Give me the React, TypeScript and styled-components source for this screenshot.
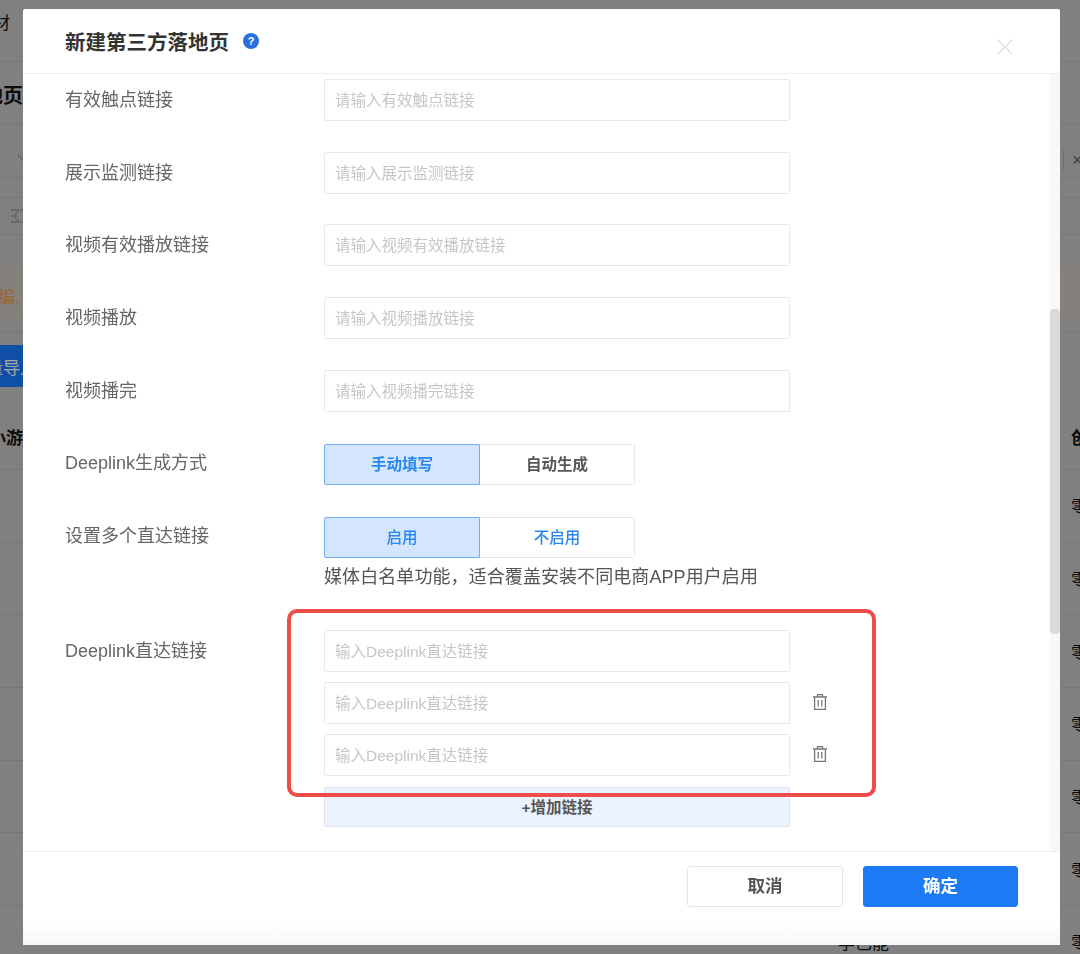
import React from 'react'
import styled, { createGlobalStyle } from 'styled-components'

const FONT = `"Liberation Sans", "Noto Sans CJK SC", sans-serif`

const GlobalStyle = createGlobalStyle`
  html, body {
    margin: 0;
    height: 100%;
    overflow: hidden;
    background: #c5c5c5;
    font-family: ${FONT};
  }
  * { box-sizing: border-box; }
`

/* page behind the dialog */
const Page = styled.div`
  width: 1080px;
  height: 954px;
  overflow: hidden;
  color: #111;
`
const BackRow = styled.div<{ $h: number; $line?: boolean; $bg?: string; $pt?: number; $pb?: number }>`
  height: ${p => p.$h}px;
  padding: ${p => p.$pt || 0}px 0 ${p => p.$pb || 0}px;
  display: flex;
  align-items: center;
  justify-content: space-between;
  background: ${p => p.$bg || 'transparent'};
  border-bottom: ${p => (p.$line ? '1px solid #b7b7b7' : 'none')};
`
const BackText = styled.span<{ $size?: number; $shift?: number; $color?: string; $bold?: boolean }>`
  font-size: ${p => p.$size || 17}px;
  font-weight: ${p => (p.$bold ? 700 : 400)};
  margin-left: ${p => p.$shift || 0}px;
  color: ${p => p.$color || '#111'};
  white-space: nowrap;
`
const BackClose = styled.span`
  width: 17px;
  height: 20px;
  border-left: 1px solid #a8a8a8;
  padding-left: 8px;
  font-size: 18px;
  line-height: 20px;
  color: #666;
`
const BackChevron = styled.svg`
  width: 12px;
  height: 8px;
  margin-left: 17px;
  margin-top: -5px;
  fill: none;
  stroke: #999;
  stroke-width: 1.2;
`
const BackTool = styled.svg`
  width: 15px;
  height: 16px;
  margin-left: 11px;
  fill: none;
  stroke: #999;
  stroke-width: 1.3;
`
const BackButton = styled.div`
  width: 23px;
  height: 42px;
  background: #1a7aff;
  color: #fff;
  font-size: 17px;
  line-height: 47px;
  overflow: hidden;
  white-space: nowrap;
  text-indent: -14px;
`
const BackCols = styled.div`
  width: 100%;
  height: 100%;
  display: grid;
  grid-template-columns: 838px 233px 9px;
  align-items: center;
  overflow: hidden;
`

/* dialog */
const Overlay = styled.div`
  position: fixed;
  inset: 0;
  background: rgba(0, 0, 0, 0.35);
  padding: 9px 20px 9px 23px;
`
const Modal = styled.div`
  height: 936px;
  background: #fff;
  border-radius: 2px;
  display: flex;
  flex-direction: column;
  color: #666;
`
const Header = styled.header`
  height: 65px;
  flex: none;
  padding: 0 47px 0 42px;
  display: flex;
  align-items: center;
  border-bottom: 1px solid #eeeeee;
`
const Title = styled.h1`
  margin: 0;
  font-size: 20.5px;
  font-weight: 700;
  color: #333;
`
const HelpBadge = styled.span`
  width: 16px;
  height: 16px;
  margin-left: 14px;
  border-radius: 50%;
  background: #2a6fe0;
  color: #fff;
  font-size: 11px;
  font-weight: 700;
  line-height: 16px;
  text-align: center;
`
const CloseIcon = styled.svg`
  margin: 12px 0 0 auto;
  width: 16px;
  height: 16px;
  stroke: #dddddd;
  stroke-width: 1.4;
  fill: none;
`
const Body = styled.div`
  flex: 1;
  min-height: 0;
  display: flex;
`
const Form = styled.div`
  flex: 1;
  padding: 5px 0 0 42px;
  display: flex;
  flex-direction: column;
`
const Field = styled.div<{ $gap?: number }>`
  display: grid;
  grid-template-columns: 259px 1fr;
  margin-bottom: ${p => p.$gap ?? 30.7}px;
`
const Label = styled.label<{ $lh?: number }>`
  height: 39px;
  font-size: 18px;
  line-height: ${p => p.$lh || 43}px;
  color: #666;
`
const TextInput = styled.input`
  display: block;
  width: 466px;
  height: 42px;
  padding: 2px 10px 0;
  border: 1px solid #e9e9e9;
  border-radius: 2px;
  outline: none;
  background: #fff;
  font-family: ${FONT};
  font-size: 15.5px;
  &::placeholder {
    color: #c4c6ca;
    opacity: 1;
  }
`
const Segments = styled.div`
  display: flex;
  width: 311px;
  height: 41px;
`
const Segment = styled.button<{ $on?: boolean; $blue?: boolean }>`
  flex: 1;
  padding: 0 0 3px;
  border: 1px solid ${p => (p.$on ? '#74aef5' : '#e9e9e9')};
  border-left-width: ${p => (p.$on ? 1 : 0)}px;
  border-radius: ${p => (p.$on ? '2px 0 0 2px' : '0 2px 2px 0')};
  background: ${p => (p.$on ? '#d3e6fd' : '#fff')};
  color: ${p => (p.$on || p.$blue ? '#2b87f0' : '#555')};
  font-family: ${FONT};
  font-size: 15.5px;
  font-weight: ${p => (p.$blue ? 500 : 700)};
`
const Hint = styled.div`
  margin-top: 8px;
  font-size: 18px;
  line-height: 22px;
  letter-spacing: 0.08px;
  color: #555;
`
const LinkStack = styled.div`
  position: relative;
  display: flex;
  flex-direction: column;
  gap: 10px;
`
const LinkRow = styled.div`
  display: flex;
  align-items: center;
  gap: 21px;
`
const TrashIcon = styled.svg`
  width: 18px;
  height: 18px;
  margin-top: -2px;
  fill: none;
  stroke: #777;
  stroke-width: 1.3;
`
const AddButton = styled.button`
  width: 466px;
  height: 40px;
  margin-top: 1px;
  padding: 0 0 2px;
  border: 1px solid #dfe3ea;
  border-radius: 2px;
  background: #ebf3fe;
  color: #555;
  font-family: ${FONT};
  font-size: 15.5px;
  font-weight: 700;
`
const RedFrame = styled.div`
  position: absolute;
  left: -37px;
  top: -21px;
  width: 589px;
  height: 188px;
  border: 4px solid #ef4d4a;
  border-radius: 10px;
  pointer-events: none;
`
const ScrollTrack = styled.div`
  flex: none;
  width: 10px;
  background: #f8f8f8;
  padding-top: 235px;
`
const ScrollThumb = styled.div`
  height: 325px;
  border-radius: 4px;
  background: #d9dadc;
`
const Footer = styled.footer`
  height: 94px;
  flex: none;
  padding: 14px 42px 0 0;
  display: flex;
  justify-content: flex-end;
  gap: 20px;
  border-top: 1px solid #eeeeee;
  background: linear-gradient(#fff 75%, #f6f6f6);
`
const FootButton = styled.button<{ $primary?: boolean }>`
  width: ${p => (p.$primary ? 155 : 156)}px;
  height: 41px;
  padding: 0 0 5px;
  border: 1px solid ${p => (p.$primary ? '#1c7af5' : '#e6e6e6')};
  border-radius: 3px;
  background: ${p => (p.$primary ? '#1c7af5' : '#fff')};
  color: ${p => (p.$primary ? '#fff' : '#555')};
  font-family: ${FONT};
  font-size: 17.5px;
  font-weight: 700;
`

const Trash = () => (
  <TrashIcon viewBox="0 0 18 18">
    <path d="M2 4h14M6.5 4V1.7h5V4M3.6 4v12.3h10.8V4M7.2 7v6.4M10.8 7v6.4" />
  </TrashIcon>
)

const plainFields = [
  ['有效触点链接', '请输入有效触点链接'],
  ['展示监测链接', '请输入展示监测链接'],
  ['视频有效播放链接', '请输入视频有效播放链接'],
  ['视频播放', '请输入视频播放链接'],
]

const App = () => {
  return (
    <>
      <GlobalStyle />
      <Page>
        <BackRow $h={62} $line $pb={18}>
          <BackText $shift={-24}>素材</BackText>
        </BackRow>
        <BackRow $h={63} $line $pt={2}>
          <BackText $shift={-37} $size={20} $bold>落地页</BackText>
        </BackRow>
        <BackRow $h={53} $line $pt={18}>
          <BackChevron viewBox="0 0 12 8">
            <path d="M1 1l5 5 5-5" />
          </BackChevron>
          <BackClose>×</BackClose>
        </BackRow>
        <BackRow $h={20} $line />
        <BackRow $h={37} $line>
          <BackTool viewBox="0 0 15 16">
            <path d="M0 2h8M0 8h6M0 14h8M14 3.2a6 6 0 1 0 0 9.6" />
          </BackTool>
        </BackRow>
        <BackRow $h={30} />
        <BackRow $h={57} $bg="#cbc6bf" $pt={4}>
          <BackText $shift={-19} $color="#f09a50">改编,</BackText>
        </BackRow>
        <BackRow $h={11} $line />
        <BackRow $h={12} />
        <BackRow $h={42}>
          <BackButton>量导入</BackButton>
        </BackRow>
        <BackRow $h={83} $line $pt={16}>
          <BackCols>
            <BackText $shift={-11} $bold>小游戏</BackText>
            <span />
            <BackText $bold>创建</BackText>
          </BackCols>
        </BackRow>
        {[0, 1, 2, 3, 4, 5, 6].map(i => (
          <BackRow key={i} $h={72.7} $line>
            <BackCols>
              <span />
              <BackText>{i === 6 ? '李已能' : ''}</BackText>
              <BackText>零</BackText>
            </BackCols>
          </BackRow>
        ))}
      </Page>
      <Overlay>
        <Modal>
          <Header>
            <Title>新建第三方落地页</Title>
            <HelpBadge>?</HelpBadge>
            <CloseIcon viewBox="0 0 16 16">
              <path d="M0.5 0.5l15 15M15.5 0.5l-15 15" />
            </CloseIcon>
          </Header>
          <Body>
            <Form>
              {plainFields.map(([label, placeholder]) => (
                <Field key={label}>
                  <Label>{label}</Label>
                  <TextInput placeholder={placeholder} readOnly />
                </Field>
              ))}
              <Field $gap={32}>
                <Label>视频播完</Label>
                <TextInput placeholder="请输入视频播完链接" readOnly />
              </Field>
              <Field $gap={32}>
                <Label $lh={39}>Deeplink生成方式</Label>
                <Segments>
                  <Segment $on>手动填写</Segment>
                  <Segment>自动生成</Segment>
                </Segments>
              </Field>
              <Field $gap={42}>
                <Label $lh={39}>设置多个直达链接</Label>
                <div>
                  <Segments>
                    <Segment $on $blue>启用</Segment>
                    <Segment $blue>不启用</Segment>
                  </Segments>
                  <Hint>媒体白名单功能，适合覆盖安装不同电商APP用户启用</Hint>
                </div>
              </Field>
              <Field $gap={0}>
                <Label>Deeplink直达链接</Label>
                <LinkStack>
                  <TextInput placeholder="输入Deeplink直达链接" readOnly />
                  <LinkRow>
                    <TextInput placeholder="输入Deeplink直达链接" readOnly />
                    <Trash />
                  </LinkRow>
                  <LinkRow>
                    <TextInput placeholder="输入Deeplink直达链接" readOnly />
                    <Trash />
                  </LinkRow>
                  <AddButton>+增加链接</AddButton>
                  <RedFrame />
                </LinkStack>
              </Field>
            </Form>
            <ScrollTrack>
              <ScrollThumb />
            </ScrollTrack>
          </Body>
          <Footer>
            <FootButton>取消</FootButton>
            <FootButton $primary>确定</FootButton>
          </Footer>
        </Modal>
      </Overlay>
    </>
  )
}

export default App
